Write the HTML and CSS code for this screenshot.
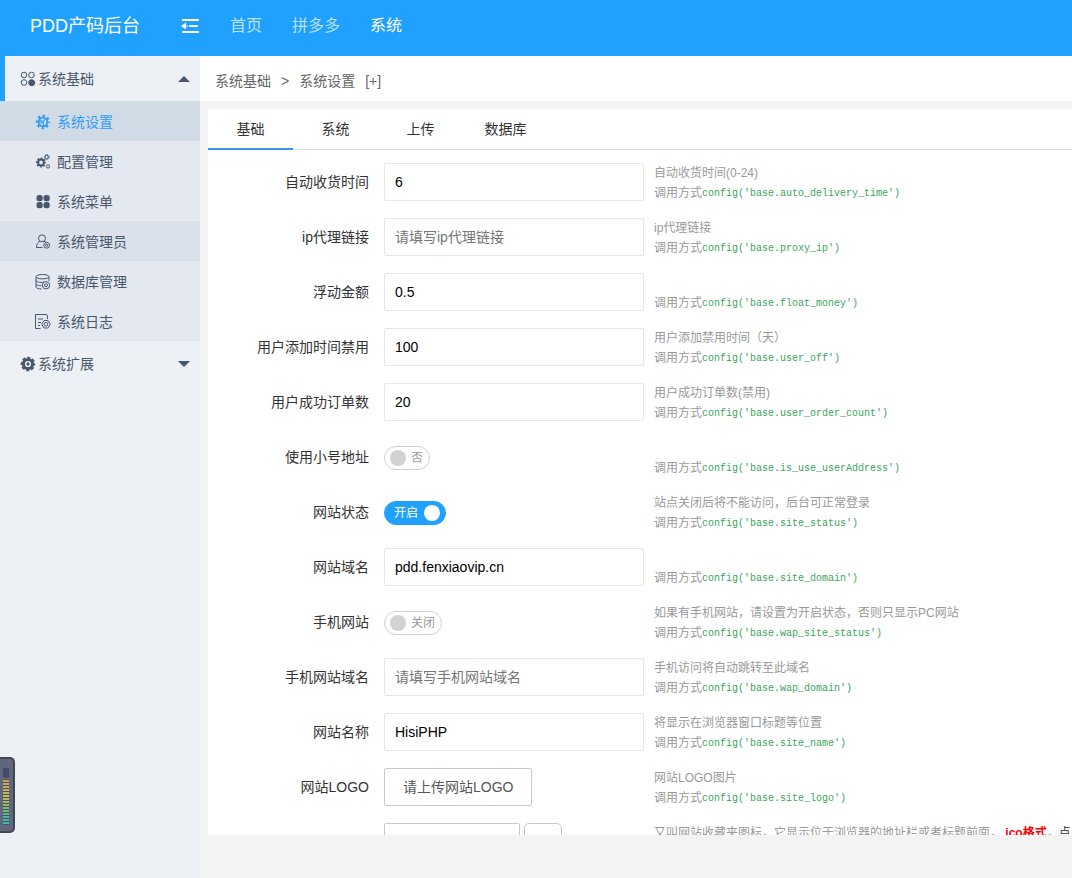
FILE: index.html
```html
<!DOCTYPE html>
<html lang="zh-CN">
<head>
<meta charset="utf-8">
<title>PDD产码后台</title>
<link rel="stylesheet" href="styles.css">
</head>
<body>
<div class="app">
  <header class="header">
    <div class="brand">PDD产码后台</div>
    <button class="fold" type="button" aria-label="收起菜单">
      <svg width="18" height="16" viewBox="0 0 18 16"><path d="M1 2h17M8 8h9M1 14h17" stroke="currentColor" stroke-width="2" fill="none"/><path d="M0 8 5 4.500v7z" fill="currentColor"/><path d="M4 8h3" stroke="currentColor" stroke-width="1"/></svg>
    </button>
    <nav class="topnav">
      <a href="#">首页</a>
      <a href="#">拼多多</a>
      <a href="#" class="current">系统</a>
    </nav>
  </header>
  <div class="body">
    <aside class="sidebar">
      <a href="#" class="group open">
        <svg width="16" height="16" viewBox="0 0 16 16" fill="none" stroke="currentColor"><circle cx="4" cy="4" r="2.800"/><circle cx="11.500" cy="4" r="2.800"/><circle cx="4" cy="11.500" r="2.800"/><circle cx="11.700" cy="11.700" r="3" fill="currentColor"/></svg>
        <span>系统基础</span><i class="caret up"></i>
      </a>
      <nav class="submenu">
        <a href="#" class="active">
          <svg width="16" height="16" viewBox="0 0 16 16" fill="none" stroke="currentColor"><circle cx="8" cy="8" r="6" stroke-width="2.400" stroke-dasharray="2.200 2.512" stroke-dashoffset="1.100"/><circle cx="8" cy="8" r="4.300" stroke-width="1.800"/><path d="M8 8 5 6M8 8l2-3M8 8l1 4M5 9l3-1" stroke-width="1.200"/></svg>
          <span>系统设置</span></a>
        <a href="#">
          <svg width="16" height="16" viewBox="0 0 16 16" fill="none" stroke="currentColor"><circle cx="6" cy="8.500" r="2.900" stroke-width="2"/><circle cx="6" cy="8.500" r="4.300" stroke-width="1.600" stroke-dasharray="1.800 1.577" stroke-dashoffset=".9"/><circle cx="11.700" cy="3" r="1.700"/><circle cx="11.700" cy="3" r="2.500" stroke-dasharray="1 .963"/><circle cx="13" cy="12.500" r="1.600"/></svg>
          <span>配置管理</span></a>
        <a href="#">
          <svg width="16" height="16" viewBox="0 0 16 16" fill="currentColor"><rect x="1.500" y="1" width="6.200" height="6.200" rx="2.500"/><rect x="8.500" y="1" width="6.200" height="6.200" rx="2.500"/><rect x="1.500" y="8" width="6.200" height="6.200" rx="2.500"/><rect x="8.500" y="8" width="6.200" height="6.200" rx="2.500"/></svg>
          <span>系统菜单</span></a>
        <a href="#" class="hovered">
          <svg width="16" height="16" viewBox="0 0 16 16" fill="none" stroke="currentColor"><circle cx="7" cy="4.300" r="3.500"/><path d="M4.900 7.300C2.600 8.400 1.500 10.500 1.500 13.500h6M9 7.300l2 1"/><circle cx="11.700" cy="11.300" r="2.900"/><circle cx="11.700" cy="11.300" r="1.100"/></svg>
          <span>系统管理员</span></a>
        <a href="#">
          <svg width="16" height="16" viewBox="0 0 16 16" fill="none" stroke="currentColor"><ellipse cx="7.500" cy="2.700" rx="6.500" ry="2.200"/><path d="M1 3v10c0 1.200 2.500 2 5.500 2M14 3v4M1 6.500c0 1.400 4 2.300 8 1.700M1 10c0 1 2.500 1.700 5.500 1.800"/><circle cx="11" cy="11.200" r="3.700"/><circle cx="11" cy="11.200" r="1.500"/></svg>
          <span>数据库管理</span></a>
        <a href="#">
          <svg width="16" height="16" viewBox="0 0 16 16" fill="none" stroke="currentColor"><path d="M12.500 5V2c0-1-.5-1.500-1.500-1.500H.5v14h5M3 5h5M3 8.500h3M3 11.500h2"/><path d="M9 6.500h4l2.300 3.700L13 14H9l-2.300-3.800z"/><circle cx="11" cy="10.200" r="1.800"/></svg>
          <span>系统日志</span></a>
      </nav>
      <a href="#" class="group">
        <svg width="16" height="16" viewBox="0 0 16 16" fill="none" stroke="currentColor"><circle cx="8" cy="8" r="4.600" stroke-width="3"/><circle cx="8" cy="8" r="6.300" stroke-width="2" stroke-dasharray="3.100 1.848" stroke-dashoffset="1.550"/><circle cx="8" cy="8" r="1.200" fill="currentColor"/></svg>
        <span>系统扩展</span><i class="caret"></i>
      </a>
      <div class="meter"><span class="bars"></span></div>
    </aside>
    <main class="main">
      <div class="crumbs"><a href="#">系统基础</a><span>&gt;</span><a href="#">系统设置</a><a href="#">[+]</a></div>
      <section class="panel">
        <nav class="tabs">
          <a href="#" class="current">基础</a><a href="#">系统</a><a href="#">上传</a><a href="#">数据库</a>
        </nav>
        <form class="form">
          <div class="row"><label class="name" for="f1">自动收货时间</label><div class="control"><input class="text" id="f1" value="6"></div><p class="hint">自动收货时间(0-24)<br>调用方式<code>config('base.auto_delivery_time')</code></p></div>
          <div class="row"><label class="name" for="f2">ip代理链接</label><div class="control"><input class="text" id="f2" placeholder="请填写ip代理链接"></div><p class="hint">ip代理链接<br>调用方式<code>config('base.proxy_ip')</code></p></div>
          <div class="row"><label class="name" for="f3">浮动金额</label><div class="control"><input class="text" id="f3" value="0.5"></div><p class="hint"><br>调用方式<code>config('base.float_money')</code></p></div>
          <div class="row"><label class="name" for="f4">用户添加时间禁用</label><div class="control"><input class="text" id="f4" value="100"></div><p class="hint">用户添加禁用时间（天）<br>调用方式<code>config('base.user_off')</code></p></div>
          <div class="row"><label class="name" for="f5">用户成功订单数</label><div class="control"><input class="text" id="f5" value="20"></div><p class="hint">用户成功订单数(禁用)<br>调用方式<code>config('base.user_order_count')</code></p></div>
          <div class="row"><label class="name" for="f6">使用小号地址</label><div class="control"><label class="switch"><input type="checkbox" id="f6"><span>否</span></label></div><p class="hint"><br>调用方式<code>config('base.is_use_userAddress')</code></p></div>
          <div class="row"><label class="name" for="f7">网站状态</label><div class="control"><label class="switch on"><input type="checkbox" id="f7" checked><span>开启</span></label></div><p class="hint">站点关闭后将不能访问，后台可正常登录<br>调用方式<code>config('base.site_status')</code></p></div>
          <div class="row"><label class="name" for="f8">网站域名</label><div class="control"><input class="text" id="f8" value="pdd.fenxiaovip.cn"></div><p class="hint"><br>调用方式<code>config('base.site_domain')</code></p></div>
          <div class="row"><label class="name" for="f9">手机网站</label><div class="control"><label class="switch"><input type="checkbox" id="f9"><span>关闭</span></label></div><p class="hint">如果有手机网站，请设置为开启状态，否则只显示PC网站<br>调用方式<code>config('base.wap_site_status')</code></p></div>
          <div class="row"><label class="name" for="f10">手机网站域名</label><div class="control"><input class="text" id="f10" placeholder="请填写手机网站域名"></div><p class="hint">手机访问将自动跳转至此域名<br>调用方式<code>config('base.wap_domain')</code></p></div>
          <div class="row"><label class="name" for="f11">网站名称</label><div class="control"><input class="text" id="f11" value="HisiPHP"></div><p class="hint">将显示在浏览器窗口标题等位置<br>调用方式<code>config('base.site_name')</code></p></div>
          <div class="row"><label class="name" for="f12">网站LOGO</label><div class="control"><button class="upload" type="button" id="f12">请上传网站LOGO</button></div><p class="hint">网站LOGO图片<br>调用方式<code>config('base.site_logo')</code></p></div>
          <div class="row"><span class="name"></span><div class="control"><button class="upload icon-upload" type="button" aria-label="上传图标"></button><span class="preview"></span></div><p class="hint">又叫网站收藏夹图标，它显示位于浏览器的地址栏或者标题前面，<strong> ico格式</strong>，<a href="#">点</a></p></div>
        </form>
      </section>
    </main>
  </div>
</div>
</body>
</html>
```
FILE: styles.css
```css
* { box-sizing: border-box; }
body {
  margin: 0;
  font: 14px/24px "Liberation Sans", "Noto Sans CJK SC", sans-serif;
  color: #333;
  background: #f3f3f3;
}
a { color: inherit; text-decoration: none; }
input, button { font: inherit; }

.app { height: 100vh; display: flex; flex-direction: column; overflow: hidden; }

.header {
  flex: none;
  height: 56px;
  padding: 0 0 4px 30px;
  display: flex;
  align-items: center;
  background: #20a0ff;
  color: #fff;
}
.brand { width: 151px; font-size: 18px; }
.fold {
  display: flex;
  padding: 0;
  border: 0;
  background: none;
  color: #fff;
}
.topnav { display: flex; gap: 30px; margin-left: 31px; font-size: 16px; }
.topnav a { color: #bce2ff; }
.topnav .current { color: #fff; }

.body { flex: 1; min-height: 0; display: flex; }

.sidebar { position: relative; flex: none; width: 200px; background: #edf1f6; color: #48576a; }
.group {
  display: flex;
  align-items: center;
  gap: 2px;
  height: 45px;
  padding: 0 10px 0 20px;
}
.group.open { padding-left: 15px; border-left: 5px solid #20a0ff; }
.caret {
  margin-left: auto;
  border: 6px solid transparent;
  border-bottom-width: 0;
  border-top-color: #48576a;
}
.caret.up { border-width: 0 6px 6px; border-bottom-color: #48576a; }
.submenu { background: #e4e8f1; }
.submenu a {
  display: flex;
  align-items: center;
  gap: 6px;
  height: 40px;
  padding: 2px 0 0 35px;
}
.submenu .active { background: #d1dbe5; color: #2f9bf8; }
.submenu .hovered { background: #dbe1ea; }

.meter {
  position: absolute;
  left: 0;
  bottom: 45px;
  width: 15px;
  height: 76px;
  padding: 9px 0 0 3px;
  border: solid #454654;
  border-width: 2px 2px 2px 0;
  border-radius: 0 5px 5px 0;
  background: #5e677b;
}
.bars {
  display: block;
  width: 6px;
  height: 57px;
  background:
    repeating-linear-gradient(transparent 0 2px, #4a5061 2px 3px),
    linear-gradient(#414a66 0 10px, #d09a60 11px, #c5bd50 28px, #8fbd60 38px, #45b5a5 50px);
}

.main { flex: 1; min-width: 0; display: flex; flex-direction: column; }
.crumbs {
  flex: none;
  display: flex;
  align-items: center;
  gap: 10px;
  height: 45px;
  padding: 4px 15px 0;
  background: #fff;
  color: #666;
}
.panel {
  flex: 1;
  min-height: 0;
  margin: 8px 0 43px 8px;
  overflow: hidden;
  background: #fff;
}
.tabs { display: flex; height: 41px; border-bottom: 1px solid #e2e2e2; line-height: 40px; }
.tabs a { min-width: 85px; height: 41px; padding: 0 15px; text-align: center; }
.tabs .current { border-bottom: 2px solid #3498e8; }

.form { display: flex; flex-direction: column; gap: 17px; padding-top: 13px; }
.row { display: grid; grid-template-columns: 161px 260px minmax(0, 1fr); min-height: 38px; }
.name { text-align: right; line-height: 38px; }
.control { display: flex; align-items: center; gap: 4px; width: 260px; margin-left: 15px; height: 38px; }
.text {
  width: 100%;
  height: 38px;
  padding: 0 10px;
  border: 1px solid #e6e6e6;
  border-radius: 2px;
  background: #fff;
  color: #000;
}
.text::placeholder { color: #757575; }
.hint {
  height: 38px;
  margin: 0 0 0 25px;
  font-size: 12px;
  line-height: 20px;
  color: #999;
  white-space: nowrap;
}
.hint code { font: 10px/16px "Liberation Mono", monospace; vertical-align: 1px; color: #3ba35e; }
.hint strong { color: #f00; }
.hint a { color: #333; }

.switch {
  display: inline-flex;
  align-items: center;
  gap: 5px;
  height: 24px;
  margin-top: 2px;
  padding: 0 6px 0 5px;
  border: 1px solid #d2d2d2;
  border-radius: 12px;
  font-size: 12px;
  color: #999;
}
.switch input {
  appearance: none;
  width: 16px;
  height: 16px;
  margin: 0;
  border-radius: 50%;
  background: #d2d2d2;
}
.switch.on {
  flex-direction: row-reverse;
  padding: 0 5px 0 9px;
  gap: 6px;
  border-color: #20a0ff;
  background: #20a0ff;
  color: #fff;
}
.switch.on input { background: #fff; }

.upload {
  height: 38px;
  padding: 0 18px;
  border: 1px solid #c9c9c9;
  border-radius: 2px;
  background: #fff;
  color: #555;
  white-space: nowrap;
}
.icon-upload { width: 136px; }
.preview { width: 38px; height: 38px; border: 1px solid #c9c9c9; border-radius: 5px; }
```
